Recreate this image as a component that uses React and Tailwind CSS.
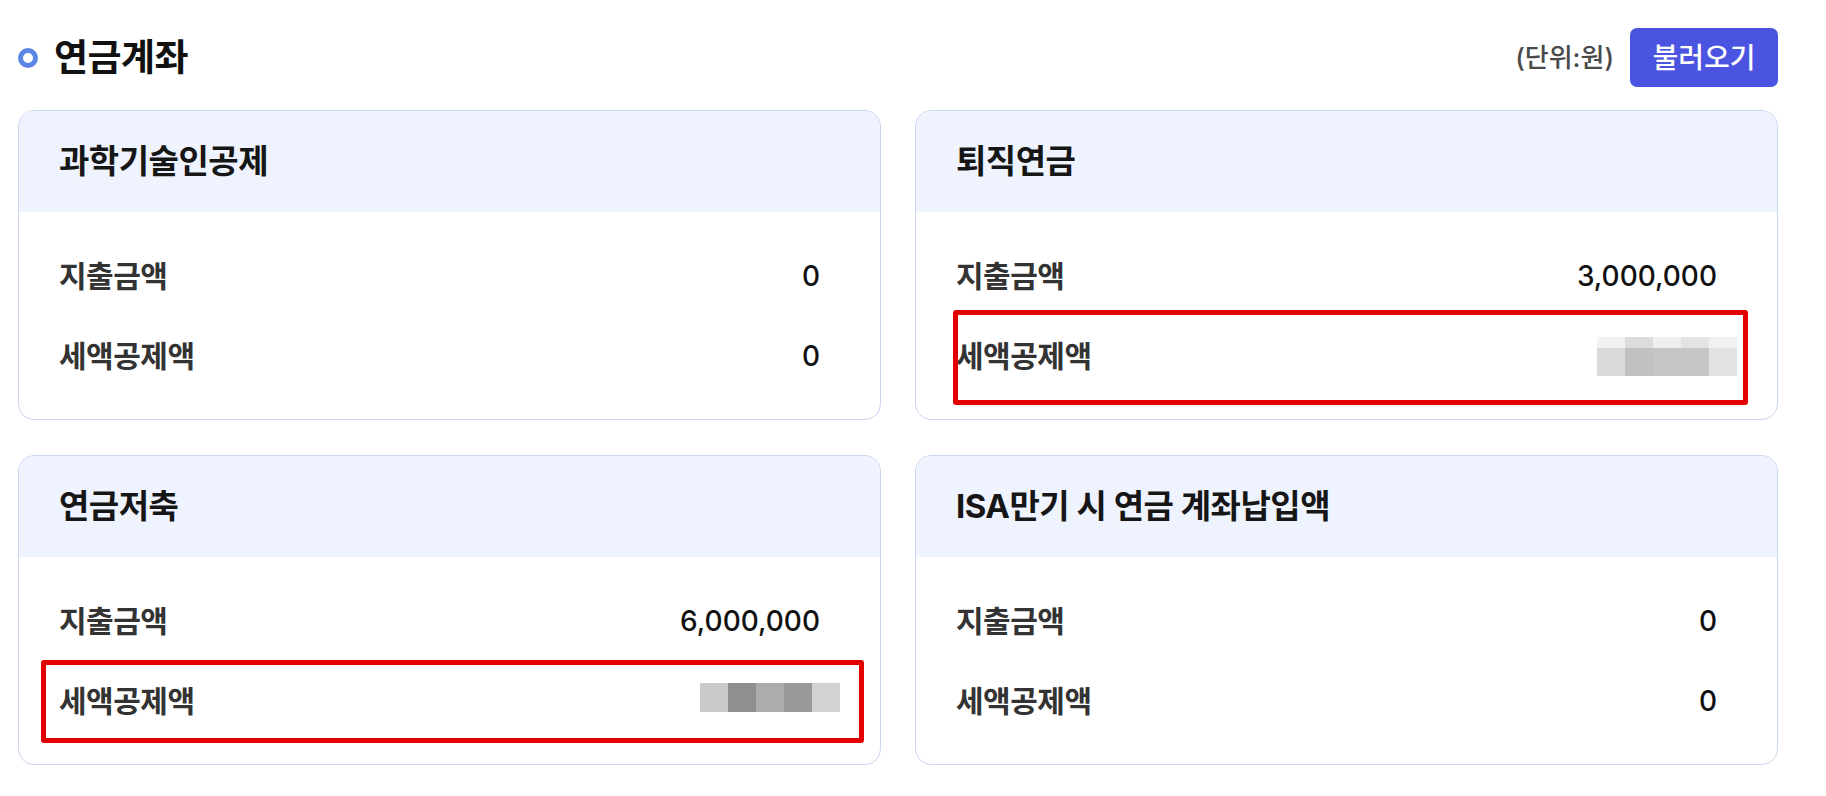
import React from "react";

const FONT = "font-['Inter','Noto_Sans_CJK_KR',sans-serif]";

// blurred (masked) value blocks
const BlurA = () => (
  <div className="flex flex-col -mr-5">
    <div className="flex">
      <div className="w-[28px] h-[11px] bg-[#f2f2f2]" />
      <div className="w-[28px] h-[11px] bg-[#dcdcdc]" />
      <div className="w-[28px] h-[11px] bg-[#efefef]" />
      <div className="w-[28px] h-[11px] bg-[#e3e3e3]" />
      <div className="w-[28px] h-[11px] bg-[#f0f0f0]" />
    </div>
    <div className="flex">
      <div className="w-[28px] h-[28px] bg-[#dadada]" />
      <div className="w-[28px] h-[28px] bg-[#c1c1c1]" />
      <div className="w-[28px] h-[28px] bg-[#c6c6c6]" />
      <div className="w-[28px] h-[28px] bg-[#c6c6c6]" />
      <div className="w-[28px] h-[28px] bg-[#e2e2e2]" />
    </div>
  </div>
);

const BlurB = () => (
  <div className="flex -mr-5 mb-[8px]">
    <div className="w-[28px] h-[29px] bg-[#cacaca]" />
    <div className="w-[28px] h-[29px] bg-[#8f8f8f]" />
    <div className="w-[28px] h-[29px] bg-[#acacac]" />
    <div className="w-[28px] h-[29px] bg-[#999999]" />
    <div className="w-[28px] h-[29px] bg-[#d2d2d2]" />
  </div>
);

const Row = ({ label, value }) => (
  <div className="h-[80px] flex items-center justify-between">
    <span className="text-[30px] font-semibold text-[#333] tracking-[-0.5px]">{label}</span>
    {typeof value === "string" ? (
      <span className="text-[28px] font-medium text-[#111]">{value}</span>
    ) : (
      value
    )}
  </div>
);

const Card = ({ title, spend, credit, highlight }) => (
  <div className="relative h-[310px] rounded-[16px] border-[1.5px] border-[#c9d6ef] bg-white overflow-visible">
    <div className="h-[101px] bg-[#eef3fd] rounded-t-[15px] flex items-center pl-[40px]">
      <h3 className="text-[33px] font-bold text-[#161616] tracking-[-0.5px]">{title}</h3>
    </div>
    <div className="pt-[24px] pl-[40px] pr-[60px]">
      <Row label="지출금액" value={spend} />
      <Row label="세액공제액" value={credit} />
    </div>
    {highlight}
  </div>
);

export default function App() {
  return (
    <div className={`${FONT} bg-white w-[1826px] h-[796px] pl-[18px] pr-[48px] pt-[28px]`}>
      {/* header */}
      <div className="h-[59px] flex items-center justify-between">
        <div className="flex items-center">
          <div className="w-[20px] h-[20px] rounded-full border-[5px] border-[#5b86e5]" />
          <h2 className="ml-[16px] text-[37px] font-bold text-[#111] tracking-[-0.5px]">연금계좌</h2>
        </div>
        <div className="flex items-center gap-[16px]">
          <span className="text-[26px] font-medium text-[#4a4a4a]">(단위:원)</span>
          <button className="w-[148px] h-[59px] rounded-[7px] bg-[#4a54e1] text-white text-[28px] font-medium">
            불러오기
          </button>
        </div>
      </div>

      {/* cards */}
      <div className="mt-[23px] grid grid-cols-2 gap-x-[34px] gap-y-[35px]">
        <Card title="과학기술인공제" spend="0" credit="0" />
        <Card
          title="퇴직연금"
          spend="3,000,000"
          credit={<BlurA />}
          highlight={
            <div className="absolute left-[37px] top-[199px] w-[795px] h-[95px] border-[5px] border-[#e20000] rounded-[3px]" />
          }
        />
        <Card
          title="연금저축"
          spend="6,000,000"
          credit={<BlurB />}
          highlight={
            <div className="absolute left-[22px] top-[204px] w-[823px] h-[83px] border-[5px] border-[#e20000] rounded-[3px]" />
          }
        />
        <Card title="ISA만기 시 연금 계좌납입액" spend="0" credit="0" />
      </div>
    </div>
  );
}
